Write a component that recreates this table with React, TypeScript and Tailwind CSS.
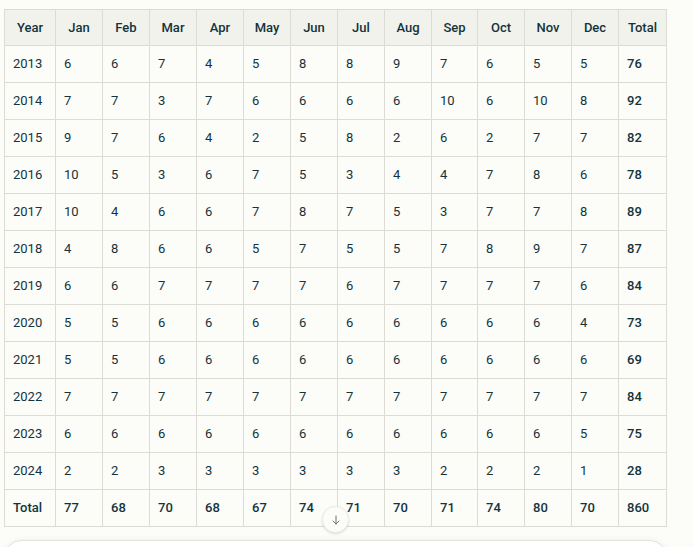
import React from 'react'

const months = ['Jan', 'Feb', 'Mar', 'Apr', 'May', 'Jun', 'Jul', 'Aug', 'Sep', 'Oct', 'Nov', 'Dec']
const widths = [51, 47, 47, 47, 47, 47, 47, 47, 47, 46, 47, 47, 47, 48]

const rows: [string, number[], number][] = [
    ['2013', [6, 6, 7, 4, 5, 8, 8, 9, 7, 6, 5, 5], 76],
    ['2014', [7, 7, 3, 7, 6, 6, 6, 6, 10, 6, 10, 8], 92],
    ['2015', [9, 7, 6, 4, 2, 5, 8, 2, 6, 2, 7, 7], 82],
    ['2016', [10, 5, 3, 6, 7, 5, 3, 4, 4, 7, 8, 6], 78],
    ['2017', [10, 4, 6, 6, 7, 8, 7, 5, 3, 7, 7, 8], 89],
    ['2018', [4, 8, 6, 6, 5, 7, 5, 5, 7, 8, 9, 7], 87],
    ['2019', [6, 6, 7, 7, 7, 7, 6, 7, 7, 7, 7, 6], 84],
    ['2020', [5, 5, 6, 6, 6, 6, 6, 6, 6, 6, 6, 4], 73],
    ['2021', [5, 5, 6, 6, 6, 6, 6, 6, 6, 6, 6, 6], 69],
    ['2022', [7, 7, 7, 7, 7, 7, 7, 7, 7, 7, 7, 7], 84],
    ['2023', [6, 6, 6, 6, 6, 6, 6, 6, 6, 6, 6, 5], 75],
    ['2024', [2, 2, 3, 3, 3, 3, 3, 3, 2, 2, 2, 1], 28],
]
const totals = [77, 68, 70, 68, 67, 74, 71, 70, 71, 74, 80, 70]

const cell = 'border border-[#dcdcd5] px-2 align-middle'
const td = cell + ' h-[37px]'
const th = cell + ' h-[36px] text-center font-medium'

export default function App() {
    return (
        <div
            className="relative h-[547px] w-[694px] overflow-hidden bg-[#fcfcf9] pl-[4px] pt-[9px] text-[13px] text-[#13343b]"
            style={{ fontFamily: 'Roboto, "Liberation Sans", Arial, sans-serif' }}
        >
            <table className="table-fixed border-collapse w-[662px]">
                <colgroup>
                    {widths.map((w, i) => <col key={i} style={{ width: w }} />)}
                </colgroup>
                <thead>
                    <tr className="bg-[#f2f2ed]">
                        <th className={th}>Year</th>
                        {months.map(m => <th key={m} className={th}>{m}</th>)}
                        <th className={th}>Total</th>
                    </tr>
                </thead>
                <tbody>
                    {rows.map(([y, vals, t]) => (
                        <tr key={y}>
                            <td className={td}>{y}</td>
                            {vals.map((v, i) => <td key={i} className={td}>{v}</td>)}
                            <td className={td + ' font-medium'}>{t}</td>
                        </tr>
                    ))}
                    <tr>
                        <td className={td + ' font-medium'}>Total</td>
                        {totals.map((v, i) => <td key={i} className={td + ' font-medium'}>{v}</td>)}
                        <td className={td + ' font-medium'}>860</td>
                    </tr>
                </tbody>
            </table>

            {/* scroll down button */}
            <button className="absolute left-[322px] top-[506px] flex h-[27px] w-[27px] items-center justify-center rounded-full border border-[#ebebe6] bg-[#fcfcf9] shadow-sm">
                <svg width="12" height="12" viewBox="0 0 24 24" fill="none" stroke="#6b7270" strokeWidth="2" strokeLinecap="round" strokeLinejoin="round">
                    <path d="M12 4v16" />
                    <path d="M6 14l6 6 6-6" />
                </svg>
            </button>

            {/* input box peeking at bottom */}
            <div className="absolute left-[5px] top-[540px] h-[40px] w-[661px] rounded-t-[16px] border border-[#e4e4de] bg-white shadow-[0_0_6px_rgba(0,0,0,0.06)]" />
        </div>
    )
}
